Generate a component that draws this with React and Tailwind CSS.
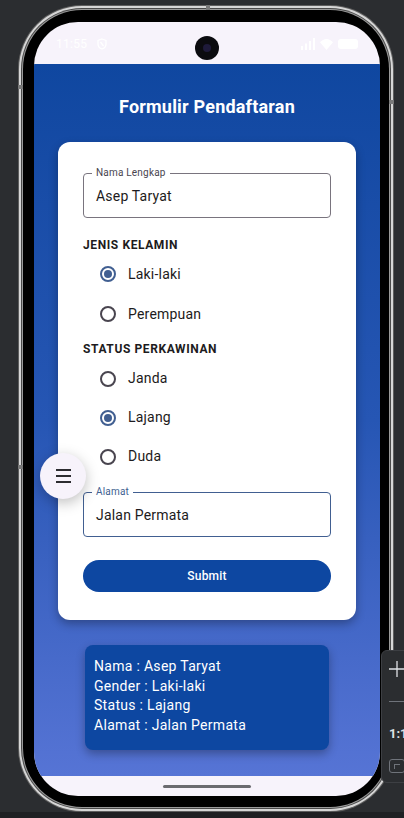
import React, { useState } from 'react';

const font = { fontFamily: 'Roboto, "Noto Sans", sans-serif' };

const Radio = ({ label, checked, onClick, h }) => (
  <button
    type="button"
    onClick={onClick}
    className={`flex items-center pl-[17px] w-full text-left ${h}`}
  >
    <span
      className={`flex items-center justify-center w-[16px] h-[16px] rounded-full border-2 ${
        checked ? 'border-[#415f91]' : 'border-[#49454f]'
      }`}
    >
      {checked && <span className="w-[8px] h-[8px] rounded-full bg-[#415f91]" />}
    </span>
    <span className="ml-[12px] text-[14px] tracking-[0.2px] text-[#1d1b20]">{label}</span>
  </button>
);

const Field = ({ label, value, focused }) => (
  <div
    className={`relative h-[45px] rounded-[4px] flex items-center px-[12px] ${
      focused ? 'border-[1.5px] border-[#415f91]' : 'border border-[#79747e]'
    }`}
  >
    <span
      className={`absolute left-[8px] top-[-8px] bg-white px-[4px] text-[10px] leading-[14px] tracking-[0.2px] ${
        focused ? 'text-[#415f91]' : 'text-[#49454f]'
      }`}
    >
      {label}
    </span>
    <span className="pt-[1px] text-[14px] tracking-[0.2px] text-[#1d1b20]">{value}</span>
  </div>
);

export default function App() {
  const [gender, setGender] = useState('Laki-laki');
  const [status, setStatus] = useState('Lajang');

  return (
    <div className="relative w-[404px] h-[818px] overflow-hidden bg-[#2b2d30]" style={font}>
      {/* Phone frame */}
      <div className="pt-[5px] pl-[18px]">
        <div className="relative w-[376px] h-[807px] rounded-[64px] bg-[#5e5e5e] p-[1px]">
          <div className="h-full rounded-[63px] bg-[#d6d6d6] p-[2px]">
            <div className="h-full rounded-[61px] bg-[#4a4a4a] p-[1px]">
              <div className="h-full rounded-[60px] bg-[#9a9a9a] p-[1px]">
                <div className="h-full rounded-[59px] bg-black pt-[12px] pl-[11px] pr-[9px] pb-[11px]">
                  {/* Screen */}
                  <div className="relative h-[774px] rounded-[44px] overflow-hidden bg-[#f7f3fb] flex flex-col">
                    {/* Status bar */}
                    <div className="h-[42px] flex items-center justify-between px-[22px] pt-[2px] text-white">
                      <div className="flex items-center gap-[10px]">
                        <span className="text-[12px] tracking-[0.3px]">11:55</span>
                        <svg width="10" height="12" viewBox="0 0 10 12" fill="none" stroke="white" strokeWidth="1.3">
                          <path d="M5 1 L9 2.5 V6 C9 8.5 7 10.3 5 11 C3 10.3 1 8.5 1 6 V2.5 Z" />
                          <path d="M3.5 4 L6.5 8" />
                        </svg>
                      </div>
                      <div className="flex items-center gap-[5px]">
                        <svg width="14" height="12" viewBox="0 0 14 12" fill="white">
                          <rect x="0" y="8" width="2" height="4" />
                          <rect x="4" y="5.5" width="2" height="6.5" />
                          <rect x="8" y="3" width="2" height="9" />
                          <rect x="12" y="0" width="2" height="12" />
                        </svg>
                        <svg width="13" height="11" viewBox="0 0 13 11" fill="white">
                          <path d="M6.5 11 L0 3.2 C1.8 1.3 4 0 6.5 0 C9 0 11.2 1.3 13 3.2 Z" />
                        </svg>
                        <div className="w-[20px] h-[10px] rounded-[3px] bg-white" />
                      </div>
                    </div>

                    {/* Content */}
                    <div className="h-[712px] bg-linear-to-b from-[#0f47a0] via-[#2656b4] to-[#5674d5] flex flex-col items-center">
                      <h1 className="mt-[31px] h-[24px] leading-[24px] text-[18px] font-bold text-white tracking-[0.2px]">
                        Formulir Pendaftaran
                      </h1>

                      <div className="mt-[23px] w-[298px] rounded-[12px] bg-white shadow-[0_4px_10px_rgba(0,0,0,0.3)] px-[25px] pt-[31px] pb-[28px] flex flex-col">
                        <Field label="Nama Lengkap" value="Asep Taryat" />

                        <div className="mt-[19px] h-[16px] leading-[16px] text-[12px] font-bold tracking-[0.6px] text-[#1d1b20]">
                          JENIS KELAMIN
                        </div>
                        <div className="mt-[1px]">
                          {['Laki-laki', 'Perempuan'].map((g) => (
                            <Radio key={g} label={g} h="h-[40px]" checked={gender === g} onClick={() => setGender(g)} />
                          ))}
                        </div>

                        <div className="mt-[7px] h-[16px] leading-[16px] text-[12px] font-bold tracking-[0.6px] text-[#1d1b20]">
                          STATUS PERKAWINAN
                        </div>
                        <div className="mt-[2px]">
                          {['Janda', 'Lajang', 'Duda'].map((s) => (
                            <Radio key={s} label={s} h="h-[39px]" checked={status === s} onClick={() => setStatus(s)} />
                          ))}
                        </div>

                        <div className="mt-[16px]">
                          <Field label="Alamat" value="Jalan Permata" focused />
                        </div>

                        <button className="mt-[23px] h-[32px] rounded-full bg-[#0d47a1] text-white text-[12px] font-medium tracking-[0.2px]">
                          Submit
                        </button>
                      </div>

                      <div className="mt-[25px] w-[244px] rounded-[8px] bg-[#0d47a1] shadow-[0_4px_10px_rgba(0,0,0,0.3)] pl-[9px] pt-[12px] pb-[14px] text-[14px] leading-[19.7px] tracking-[0.3px] text-white">
                        <div>Nama : Asep Taryat</div>
                        <div>Gender : {gender}</div>
                        <div>Status : {status}</div>
                        <div>Alamat : Jalan Permata</div>
                      </div>
                    </div>

                    {/* Nav bar */}
                    <div className="flex-1 flex items-center justify-center">
                      <div className="w-[88px] h-[3px] rounded-full bg-[#6b6b70]" />
                    </div>

                    {/* Camera */}
                    <div className="absolute left-[161px] top-[14px] w-[24px] h-[24px] rounded-full bg-[#0b0b0f] flex items-center justify-center">
                      <div className="w-[8px] h-[8px] rounded-full bg-[#1e1a3a]" />
                    </div>

                    {/* Floating menu */}
                    <button className="absolute left-[6px] top-[431px] w-[46px] h-[46px] rounded-full bg-[#f7f3fb] shadow-[0_4px_14px_rgba(0,0,0,0.25)] flex flex-col items-center justify-center gap-[4px]">
                      <span className="w-[15px] h-[2px] bg-[#2c2c30]" />
                      <span className="w-[15px] h-[2px] bg-[#2c2c30]" />
                      <span className="w-[15px] h-[2px] bg-[#2c2c30]" />
                    </button>
                  </div>
                </div>
              </div>
            </div>
          </div>
          {/* rim marks */}
          <div className="absolute left-[188px] top-0 w-[4px] h-[5px] bg-[#7a7a7a]" />
          <div className="absolute left-0 top-[80px] w-[5px] h-[4px] bg-[#7a7a7a]" />
          <div className="absolute right-0 top-[95px] w-[5px] h-[4px] bg-[#7a7a7a]" />
          <div className="absolute left-0 top-[460px] w-[5px] h-[4px] bg-[#7a7a7a]" />
        </div>
      </div>

      {/* Bottom strip */}
      <div className="absolute left-0 bottom-0 w-full h-[6px] bg-[#1f2023]" />

      {/* Zoom controls panel */}
      <div className="absolute left-[381px] top-[650px] w-[30px] h-[133px] rounded-tl-[6px] rounded-bl-[6px] bg-[#2b2d30] border border-[#3d3f43] flex flex-col items-start pl-[7px] text-[#cfd1d4]">
        <svg className="mt-[10px]" width="16" height="16" viewBox="0 0 16 16" stroke="#dfe1e5" strokeWidth="1.3">
          <path d="M8 0 V16 M0 8 H16" />
        </svg>
        <div className="mt-[24px] w-[16px] h-[1px] bg-[#6f737a]" />
        <div className="mt-[24px] whitespace-nowrap text-[13px] font-bold leading-[16px] text-[#dfe1e5]">1:1</div>
        <div className="mt-[17px] w-[16px] h-[14px] rounded-[3px] border border-[#6f737a] flex items-center justify-center">
          <div className="w-[6px] h-[5px] border-l border-t border-[#6f737a]" />
        </div>
      </div>
    </div>
  );
}
